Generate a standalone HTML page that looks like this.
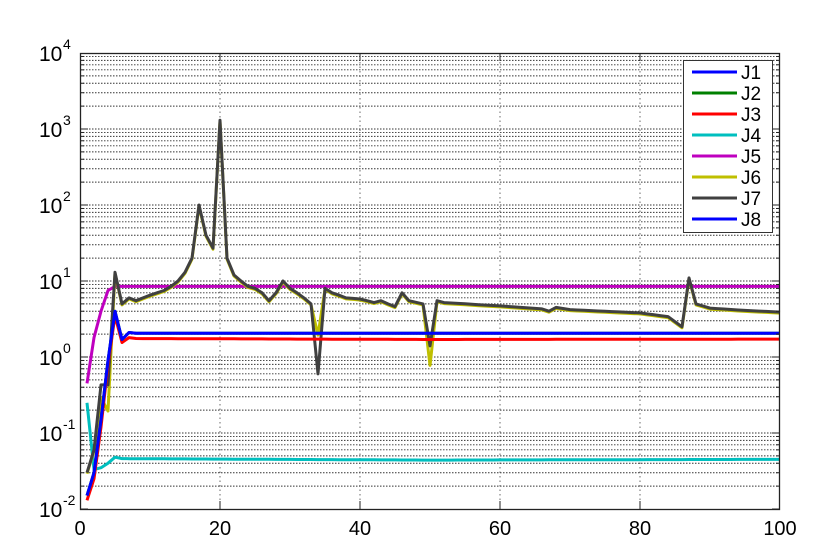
<!DOCTYPE html>
<html><head><meta charset="utf-8"><style>
html,body{margin:0;padding:0;background:#fff;width:831px;height:554px;overflow:hidden}
svg{display:block;font-family:"Liberation Sans",Arial,sans-serif}
</style></head><body>
<svg id="s" width="831" height="554" viewBox="0 0 831 554" xmlns="http://www.w3.org/2000/svg">
<g id="grid"></g>
<g id="lines" fill="none" stroke-width="3" stroke-linejoin="round"></g>
<rect x="80.5" y="53.5" width="699" height="456" fill="none" stroke="#222" stroke-width="1.3"/>
<g id="ticks" stroke="#222" stroke-width="1"></g>
<g font-size="20" fill="#000" text-anchor="middle">
<text x="80" y="535">0</text><text x="220" y="535">20</text><text x="360" y="535">40</text>
<text x="500" y="535">60</text><text x="640" y="535">80</text><text x="780" y="535">100</text>
</g>
<g id="ylab" font-size="21" fill="#000"></g>
<g>
<rect x="683.5" y="60.5" width="89" height="172" fill="#fff" stroke="#333" stroke-width="1"/>
</g>
<g id="leg" font-size="19" fill="#000"></g>
</svg>
<script>
const NS="http://www.w3.org/2000/svg";
function el(p,t,a,txt){const e=document.createElementNS(NS,t);for(const k in a)e.setAttribute(k,a[k]);if(txt)e.textContent=txt;document.getElementById(p).appendChild(e);return e;}
const X=i=>80+7*i, Y=v=>53+(4-Math.log10(v))*76;
for(let d=-2;d<4;d++)for(let m=1;m<10;m++){const y=Y(m*Math.pow(10,d));if(m>1||d>-2)el("grid","line",{x1:80,x2:780,y1:y,y2:y,stroke:"#333","stroke-width":0.9,"stroke-dasharray":"1.5,1.5"});
 el("ticks","line",{x1:80,x2:m==1?88:84,y1:y,y2:y});el("ticks","line",{x1:780,x2:m==1?772:776,y1:y,y2:y});}
for(const v of [20,40,60,80]){el("grid","line",{x1:X(v),x2:X(v),y1:53,y2:509,stroke:"#444","stroke-width":0.8,"stroke-dasharray":"1.5,3"});
 el("ticks","line",{x1:X(v),x2:X(v),y1:509,y2:501});el("ticks","line",{x1:X(v),x2:X(v),y1:53,y2:61});}
for(let d=-2;d<=4;d++){const y=Y(Math.pow(10,d));el("ylab","text",{x:39,y:y+8},"10");
 el("ylab","text",{x:63,y:y-4,"font-size":14},String(d));}
function interp(pts){const a=[];for(let k=0;k<pts.length-1;k++){const[i0,v0]=pts[k],[i1,v1]=pts[k+1];for(let i=i0;i<i1;i++)a.push([i,Math.pow(10,Math.log10(v0)+(Math.log10(v1)-Math.log10(v0))*(i-i0)/(i1-i0))]);}a.push(pts[pts.length-1]);return a;}
function path(pts,c){el("lines","path",{d:interp(pts).map((p,k)=>(k?"L":"M")+X(p[0]).toFixed(1)+","+Y(p[1]).toFixed(1)).join(""),stroke:c});}
const j7=[[1,0.03],[2,0.06],[3,0.43],[4,0.43],[5,13],[6,5],[7,6],[8,5.5],[9,6],[10,6.5],[11,7],[12,7.5],[13,8.5],[14,10],[15,13],[16,20],[17,100],[18,40],[19,27],[20,1300],[21,20],[22,12],[23,10],[24,8.5],[25,8],[26,7],[27,5.5],[28,7],[29,10],[30,8],[31,7],[32,6],[33,5],[34,0.6],[35,8],[36,7],[37,6.5],[38,6],[40,5.8],[41,5.5],[42,5.2],[43,5.5],[44,5],[45,4.6],[46,7],[47,5.5],[49,5],[50,1.4],[51,5.5],[52,5.2],[60,4.7],[66,4.3],[67,4],[68,4.5],[70,4.2],[80,3.8],[84,3.4],[86,2.5],[87,11],[88,5],[90,4.4],[95,4.1],[100,3.9]];
const j6=j7.map(p=>{let v=p[1];if(p[0]==4)v=0.2;if(p[0]==34)v=2;if(p[0]==50)v=0.8;if(p[0]==3)v=0.3;return [p[0],v*0.97];});
const j5=[[1,0.45],[2,1.8],[3,4],[4,7.5],[5,8.5],[100,8.5]];
const j1=[[1,0.015],[2,0.03],[3,0.15],[4,0.9],[5,4],[6,1.7],[7,2.1],[8,2.05],[100,2.05]];
const j3=[[1,0.013],[2,0.025],[3,0.12],[4,0.8],[5,3.5],[6,1.55],[7,1.8],[8,1.75],[50,1.7],[100,1.72]];
const j4=[[1,0.25],[2,0.033],[3,0.035],[4,0.04],[5,0.048],[6,0.046],[50,0.044],[100,0.045]];
path(j4,"#00bfbf");path(j5,"#bf00bf");path(j6,"#bfbf00");path(j7,"#404040");path(j3,"#ff0000");path(j1,"#008000");path(j1,"#0000ff");
const L=[["J1","#0000ff"],["J2","#008000"],["J3","#ff0000"],["J4","#00bfbf"],["J5","#bf00bf"],["J6","#bfbf00"],["J7","#404040"],["J8","#0000ff"]];
L.forEach((e,k)=>{const y=72+k*21;el("leg","line",{x1:692,x2:737,y1:y,y2:y,stroke:e[1],"stroke-width":3});el("leg","text",{x:741,y:y+7},e[0]);});
</script>
</body></html>
